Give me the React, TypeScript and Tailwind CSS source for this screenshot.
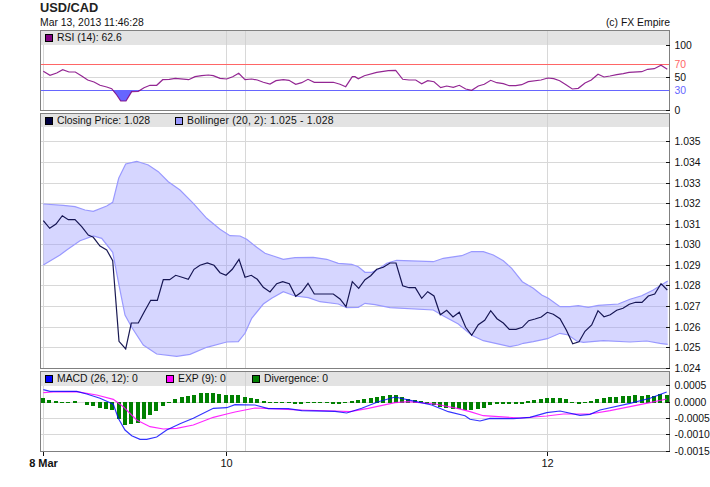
import React from "react";

type P = [number, number];
const pts = (a: P[]) => a.map((p) => p.join(",")).join(" ");

const rsi: P[] = [[43.3,71.3],[50,75.3],[56.7,73],[62.7,69.7],[69,72],[75.3,72],[81.7,76],[87.7,80],[94,82],[100,85.3],[106.7,87],[111.7,88.7],[116.7,95],[120.7,101],[126,101],[131.7,91.7],[138.3,91.3],[144,87.7],[150,85.3],[156.7,85.3],[162.7,79.7],[169.3,79.3],[175.3,78.3],[188.7,79.7],[195,76.7],[201.7,75.7],[208.3,75],[213.3,75.7],[220,78.3],[226.7,79],[232.7,76.7],[238.7,73.3],[245,79.7],[251.7,79],[257.3,80],[263.3,82.3],[270,84],[276,80.7],[283.3,79.7],[289,80.3],[295.7,84.3],[301.7,82.7],[308,79.3],[314.3,82.3],[333.3,82.3],[340,84.3],[345.7,86.7],[352.3,76.7],[355,76.7],[358.3,78.7],[364.3,75.7],[376.7,72.3],[388.3,70.7],[395.7,70.3],[402.7,79.3],[409,80],[415.7,80],[421.7,83.7],[427.7,80.7],[434,81.7],[440.7,87.7],[446.7,86],[453.3,87.3],[459.3,85.3],[465.7,89],[471.7,90.3],[478.3,86],[484.3,84.3],[490.7,80.3],[496.7,82.7],[503.3,83.7],[509.3,85.7],[515.7,85.7],[521.7,84.7],[528.3,81.7],[541,80],[547.7,78],[553.7,78.7],[559.7,80.7],[566,84.7],[572.3,89],[578.3,88.3],[585,83],[591.3,80],[598,74.3],[604,77],[610,76],[616.7,74.7],[623.3,73.7],[629,72.3],[641.7,71.7],[647.7,69.3],[654.3,68.7],[661,65.3],[667.3,69.3]];
const rsiFill: P[] = [[112.8,90.5],[116.7,95],[120.7,101],[126,101],[131.7,91.7],[133,90.5]];

const close: P[] = [[43.3,220.7],[49.7,228.3],[56,224],[62.3,215.7],[68.3,219.7],[75,219.7],[81.7,226.7],[88.3,235],[93.3,237.3],[100,246],[106.7,250],[112.7,260.7],[119,341.3],[125.7,349],[131.3,323],[138.3,323],[144.3,311.7],[150.7,300.3],[157.3,300.3],[163.3,279.7],[169.7,279.7],[175.7,275.3],[182,277.3],[188.3,279.3],[194,269.3],[200,265.3],[207.3,263],[214,265.3],[220,272.7],[226,275.3],[232.3,269.3],[239,259.3],[245,277.3],[251.3,275.3],[257.3,279.3],[263.3,287.3],[270,292],[276.7,283.7],[282.7,281.7],[289.3,283.7],[295.7,296.3],[301.7,292],[308,283.3],[314.3,294],[333.3,294],[340,299],[346,306.7],[352.3,281.7],[358.7,288.3],[365,279.7],[370.7,275.7],[376.7,269.3],[383.3,267.3],[390,263],[396,263],[402.7,285.7],[409,287.7],[415.3,287.7],[421.7,298.3],[427.7,291.7],[434,296],[440.3,314.7],[446.7,310.3],[453,317],[459.3,312.3],[465.7,327.3],[471.7,335.3],[478.3,324.7],[484.7,320.3],[490.7,310.7],[497,318.7],[503.3,323],[509.3,329.3],[516,329.3],[522.3,327.3],[528.7,320.7],[535,319],[541.3,317],[547.3,312.3],[553.3,314.3],[560,318.7],[566.3,330],[572.7,343.7],[579,341.7],[585,331.3],[591.7,325],[598,310.7],[604,316.7],[610.3,314.7],[616.7,310.3],[623,308.3],[629.3,304.3],[635.7,302.3],[642,302.3],[648.3,296],[654.7,294],[661,283.7],[667.3,290]];

const upper: P[] = [[43.3,204],[63.3,205.3],[75,206.7],[85,210],[93.3,211.3],[106.7,206],[112.7,202.3],[118.7,178.3],[125.7,164],[136.7,161.3],[148.3,165],[158.3,171.7],[168.3,181.7],[180,190],[193.3,203.3],[206.7,218.3],[220,229.3],[230,235.7],[240,236],[246.7,239.3],[256.7,247.3],[265,253.3],[273.3,256],[283.3,259.3],[295,257.7],[313.3,257.3],[326.7,259.3],[338.3,263.3],[351.7,264.3],[358.3,266.7],[365,272.3],[371.7,272.3],[378.3,269.3],[386.7,263.3],[396.7,260.3],[433.3,261.7],[443.3,258.3],[461.7,255.7],[471.7,251.5],[483.3,251.7],[493.3,255],[503.3,260.7],[511.7,268.3],[522.3,281.7],[533.3,288.3],[541.7,295],[548.3,298.3],[560,306.7],[570,306.7],[578.3,305.7],[588.3,307.3],[598.3,305.3],[618.3,304],[630,299.3],[641.7,295.7],[653.3,290],[667.7,281]];
const lower: P[] = [[43.3,265],[60,255],[66.7,250],[80,240.7],[93.3,236],[101.7,238.3],[112.7,252.3],[119.3,286.7],[125,315],[131.7,327.3],[143.3,345],[156.7,354],[176.7,356.3],[190,354.3],[206.7,347.3],[226.7,342],[238.3,341.7],[245,333.3],[251.7,318.3],[263.3,304],[271.7,298.3],[283.3,291.7],[295,296],[308.3,297.7],[320,301.7],[338.3,304],[346.7,307.7],[358.3,307.3],[365,303.3],[375,304.7],[390,307.7],[433.3,310],[441.7,315],[458.3,324],[471.7,335.3],[483.3,340.7],[496.7,343.7],[510,346.7],[518.3,345],[523.3,343.3],[533.3,341.7],[547.3,338.7],[560,333.3],[568.3,335],[576.7,341],[583.3,342.3],[603.3,340.7],[630,342],[646.7,341],[660,343.3],[667.7,344.3]];

const macd: P[] = [[43.3,389.7],[50,391.3],[76.7,391.3],[86.7,394],[100,398.3],[113.3,404.3],[118.3,418.3],[125,430],[131.7,435.7],[140,439.3],[146.7,439.3],[156.7,437],[166.7,430],[180,423.7],[193.3,418.3],[213.3,408.3],[226.7,407.7],[235,404.7],[255,405],[268.3,408.7],[288.3,408.7],[301.7,410.7],[335,411.3],[346.7,413],[361.7,408.3],[378.3,401.7],[395,397],[411.7,400.7],[431.7,405],[448.3,411.7],[465,415.7],[470,419.3],[480,421],[490,418.3],[513.3,418.7],[530,417.3],[546.7,412.7],[560,411],[580,415.3],[590,414.3],[600,410],[630,403.3],[650,398.3],[666.7,392]];
const exp: P[] = [[43.3,392.7],[53.3,392],[76.7,391.7],[96.7,395],[113.3,399.3],[123.3,406.7],[136.7,420],[150,426.7],[163.3,429],[176.7,428.3],[193.3,425],[213.3,417.3],[226.7,414],[235,412],[255,408],[271.7,408.7],[298.3,410],[335,411],[350,411.7],[368.3,408.3],[395,402.7],[408.3,401.7],[435,404],[458.3,408.7],[470,411.7],[483.3,415.7],[520,418],[546.7,416],[563.3,414],[590,414],[610,410.7],[630,406.7],[650,402.7],[666.7,399]];

const div = [11,5,1,-4,-4,2,0,-10,-12,-19,-22,-25,-53,-70,-67,-64,-52,-40,-28,-12,-3,8,13,16,19,26,26,26,23,20,20,20,14,11,8,2,-3,-3,-3,-4,-7,-6,-4,-5,-5,-5,-6,-7,-5,2,5,8,11,14,17,20,20,14,7,5,2,-7,-10,-15,-19,-21,-22,-24,-25,-21,-19,-10,-6,-6,-6,-6,-6,2,5,8,11,11,11,8,-3,-7,-3,2,8,11,14,14,17,17,20,17,20,17,23,20];

const vGrid = [43.5, 226.5, 245.5, 547.5];

function Legend({ color, label, className }: { color: string; label: string; className?: string }) {
  return (
    <div className={`flex items-center gap-[4px] shrink-0 ${className ?? ""}`}>
      <span className="block w-[8px] h-[8px] border border-black" style={{ backgroundColor: color }} />
      <span>{label}</span>
    </div>
  );
}

type Tick = { y: number; text: string; color?: string; tick?: boolean };

function Axis({ top, ticks }: { top: number; ticks: Tick[] }) {
  return (
    <div className="relative w-[40px]">
      {ticks.map((t) => (
        <React.Fragment key={t.text}>
          {t.tick !== false && (
            <span className="absolute left-[-4px] w-[4px] h-px bg-[#111111]" style={{ top: t.y - top }} />
          )}
          <span
            className="absolute left-[4.5px] leading-none -translate-y-1/2 whitespace-nowrap"
            style={{ top: t.y - top + 0.5, color: t.color ?? "#111111" }}
          >
            {t.text}
          </span>
        </React.Fragment>
      ))}
    </div>
  );
}

function Panel({
  top,
  bodyTop,
  bottom,
  legends,
  ticks,
  hLines,
  className,
  children,
}: {
  top: number;
  bodyTop: number;
  bottom: number;
  legends: React.ReactNode;
  ticks: Tick[];
  hLines: number[];
  className?: string;
  children?: React.ReactNode;
}) {
  const h = bottom - bodyTop;
  return (
    <div className={`flex ${className ?? ""}`}>
      <div className="w-[630px] border border-[#808080] bg-white" style={{ height: bottom - top + 1 }}>
        <div className="relative flex items-center pl-[4px] bg-[#e3e3e3]" style={{ height: bodyTop - top - 1 }}>
          {vGrid.slice(1).map((x) => (
            <span key={x} className="absolute top-0 bottom-0 w-px bg-[#d2d2d2]" style={{ left: x - 41.5 }} />
          ))}
          <div className="relative flex items-center">{legends}</div>
        </div>
        <svg width={628} height={h} viewBox={`41 ${bodyTop} 628 ${h}`} className="block">
          {hLines.map((y) => (
            <line key={y} x1={41} x2={669} y1={y} y2={y} stroke="#d8d8d8" />
          ))}
          {vGrid.map((x) => (
            <line key={x} x1={x} x2={x} y1={bodyTop} y2={bottom} stroke="#d8d8d8" />
          ))}
          {children}
        </svg>
      </div>
      <Axis top={top} ticks={ticks} />
    </div>
  );
}

export default function App() {
  const bollinger = pts([...upper, ...[...lower].reverse()]);
  return (
    <div
      className="relative w-[710px] h-[487px] overflow-hidden bg-white pl-[40px] text-[10.4px] text-[#111111]"
      style={{ fontFamily: '"Liberation Sans", Arial, sans-serif' }}
    >
      <div className="h-[16px] pt-[1px] text-[12.8px] leading-[14px] font-bold text-[#222222]">USD/CAD</div>
      <div className="w-[630px] h-[14px] flex justify-between leading-[14px]">
        <span>Mar 13, 2013 11:46:28</span>
        <span>(c) FX Empire</span>
      </div>

      <Panel
        top={30}
        bodyTop={45}
        bottom={110}
        hLines={[77.5]}
        ticks={[
          { y: 45, text: "100" },
          { y: 64, text: "70", color: "#ff6666", tick: false },
          { y: 77, text: "50" },
          { y: 90, text: "30", color: "#6666ff", tick: false },
          { y: 110, text: "0" },
        ]}
        legends={<Legend color="#800080" label="RSI (14): 62.6" />}
      >
        <polygon points={pts(rsiFill)} fill="#6666ff" />
        <line x1={41} x2={669} y1={64.5} y2={64.5} stroke="#ff6666" />
        <line x1={41} x2={669} y1={90.5} y2={90.5} stroke="#6666ff" />
        <polyline points={pts(rsi)} fill="none" stroke="#800080" strokeWidth={1.2} strokeOpacity={0.85} />
      </Panel>

      <Panel
        className="mt-[2px]"
        top={113}
        bodyTop={127}
        bottom={368}
        hLines={[141.5, 162.5, 183.5, 203.5, 224.5, 244.5, 265.5, 285.5, 306.5, 327.5, 347.5]}
        ticks={[
          { y: 141, text: "1.035" },
          { y: 162, text: "1.034" },
          { y: 183, text: "1.033" },
          { y: 203, text: "1.032" },
          { y: 224, text: "1.031" },
          { y: 244, text: "1.030" },
          { y: 265, text: "1.029" },
          { y: 285, text: "1.028" },
          { y: 306, text: "1.027" },
          { y: 327, text: "1.026" },
          { y: 347, text: "1.025" },
          { y: 368, text: "1.024" },
        ]}
        legends={
          <>
            <Legend color="#000040" label="Closing Price: 1.028" className="w-[130px]" />
            <Legend
              color="#9999ff"
              label="Bollinger (20, 2): 1.025 - 1.028"
              className="tracking-[0.2px]"
            />
          </>
        }
      >
        <polygon points={bollinger} fill="#9999ff" fillOpacity={0.4} />
        <polyline points={pts(upper)} fill="none" stroke="#9999ff" strokeWidth={1.2} />
        <polyline points={pts(lower)} fill="none" stroke="#9999ff" strokeWidth={1.2} />
        <polyline points={pts(close)} fill="none" stroke="#000040" strokeWidth={1.2} strokeOpacity={0.9} />
      </Panel>

      <Panel
        className="mt-[2px]"
        top={371}
        bodyTop={386}
        bottom={451}
        hLines={[402.5, 418.5, 434.5]}
        ticks={[
          { y: 385, text: "0.0005" },
          { y: 402, text: "0.0000" },
          { y: 418, text: "-0.0005" },
          { y: 434, text: "-0.0010" },
          { y: 451, text: "-0.0015" },
        ]}
        legends={
          <>
            <Legend color="#0000ff" label="MACD (26, 12): 0" className="w-[121px]" />
            <Legend color="#ff00ff" label="EXP (9): 0" className="w-[86px]" />
            <Legend color="#008000" label="Divergence: 0" />
          </>
        }
      >
        {div.map((v, i) => {
          const t = v > 0 ? 110 - v : 110;
          const b = v > 0 ? 113 : 110 - v;
          return (
            <rect
              key={i}
              x={41 + 6.3 * i}
              y={365 + t / 3}
              width={4}
              height={(b - t) / 3}
              fill="#008000"
              shapeRendering="crispEdges"
            />
          );
        })}
        <polyline points={pts(exp)} fill="none" stroke="#ff00ff" strokeWidth={1.2} strokeOpacity={0.85} />
        <polyline points={pts(macd)} fill="none" stroke="#0000ff" strokeWidth={1.2} strokeOpacity={0.8} />
      </Panel>

      <div className="relative w-[630px] h-[36px]">
        {[
          { x: 43, text: "8 Mar", bold: true },
          { x: 226, text: "10", bold: false },
          { x: 547, text: "12", bold: false },
        ].map((t) => (
          <React.Fragment key={t.text}>
            <span className="absolute top-0 w-px h-[4px] bg-[#111111]" style={{ left: t.x - 40 }} />
            <span
              className={`absolute top-[5px] leading-[12px] -translate-x-1/2 whitespace-nowrap ${t.bold ? "font-bold text-[11px]" : "text-[11px]"}`}
              style={{ left: t.x - 40 + 0.5 }}
            >
              {t.text}
            </span>
          </React.Fragment>
        ))}
      </div>
    </div>
  );
}
